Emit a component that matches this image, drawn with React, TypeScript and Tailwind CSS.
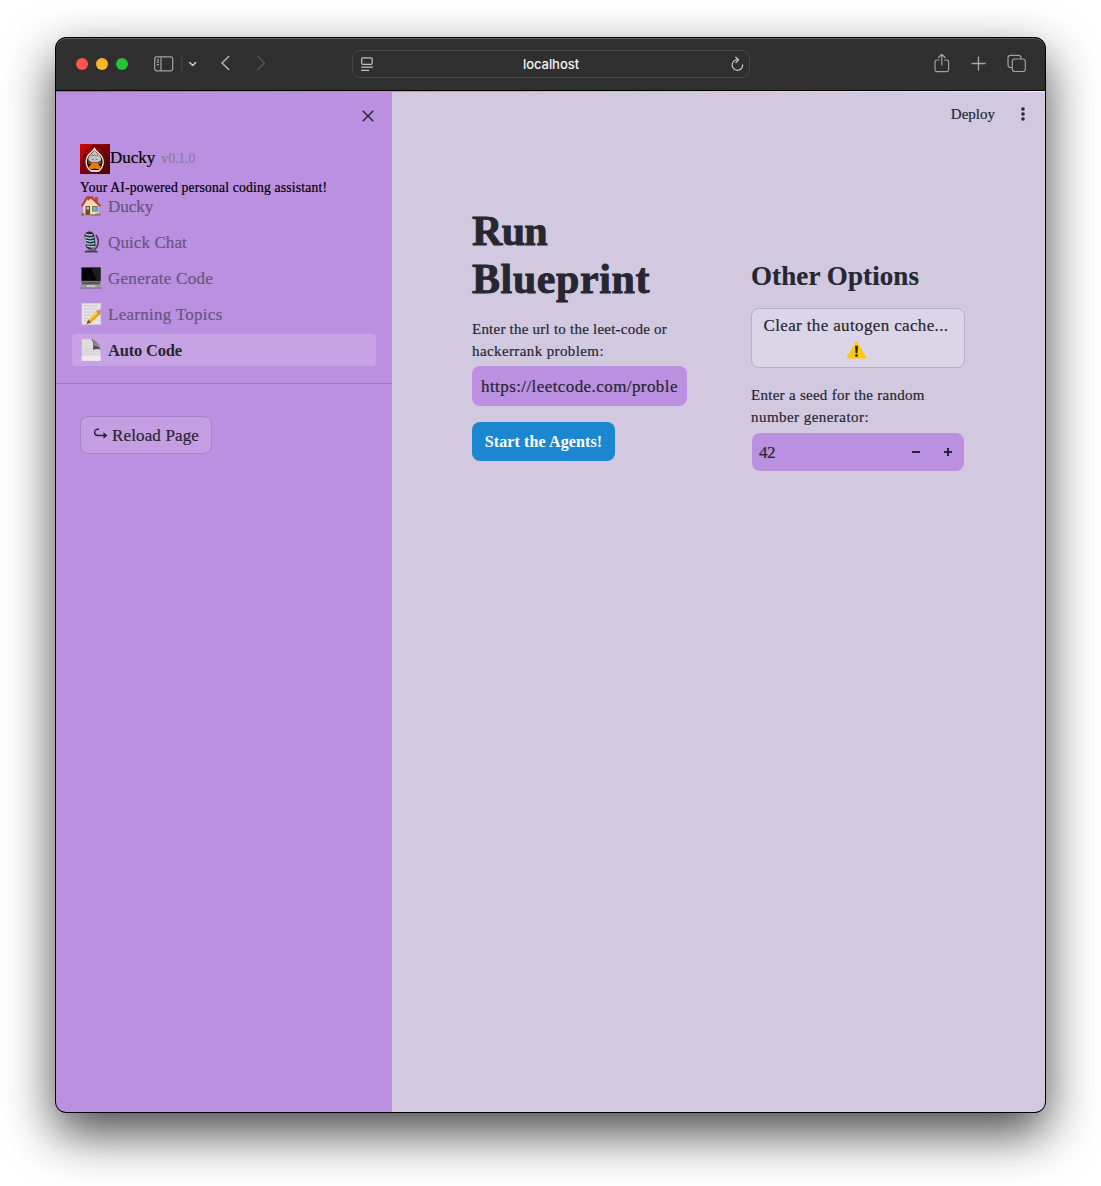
import React from "react";

function House() {
  return (
    <svg width="22" height="22" viewBox="0 0 22 22">
      <rect x="15" y="2" width="3" height="7" fill="#a4543c" />
      <path d="M3.500 10 11 3l7.500 7v10h-15z" fill="#f0dfb4" />
      <path d="M3.500 10 7.500 4.500 11 9v11H3.500z" fill="#e9d3a2" />
      <path d="M.8 10.800 6.500 1.300h6l8.800 9.500-1.500 1.300-8.300-7.900-1-.8-8 8.600z" fill="#b8452f" />
      <path d="M3.500 10.500 7.500 4.200l4 5.800v4h-8z" fill="#f0dfb4" />
      <rect x="5.500" y="11" width="4.500" height="9" fill="#774629" />
      <rect x="6.500" y="12" width="2.500" height="2.500" fill="#a9c8d8" />
      <rect x="12.200" y="11" width="5.500" height="5.500" fill="#8b5a3a" />
      <rect x="13" y="11.800" width="4" height="4" fill="#5eb1df" />
      <path d="M1 19c1-2 2.500-2 3.500 0v1.800H1zM10 20.800c1-2.500 3-2 4-1 1-1.500 5-2 6.500 0v1z" fill="#7d8055" />
    </svg>
  );
}

function Microphone() {
  return (
    <svg width="22" height="22" viewBox="0 0 22 22">
      <path d="M5.500 19.500h11.500l1 2H4.500z" fill="#424347" />
      <path d="M16 4c3 4 3 9 .5 12.500l-3 3" fill="none" stroke="#3e3f45" strokeWidth="1.600" />
      <g transform="rotate(-8 10 10)">
        <rect x="5" y=".6" width="10" height="17.400" rx="4.500" fill="#242b35" />
        <path d="M6.500 2.500c2 1.200 4.500 2 7 1.500M5.700 5.500c2.500 1.500 5.500 2.300 8.500 1.500M5.700 8.500c2.500 1.500 5.500 2.300 8.500 1.500M5.700 11.500c2.500 1.500 5.500 2.300 8.500 1.500M6.500 14.500c2.500 1.500 5 2 7.200 1.500" fill="none" stroke="#b3d6e3" strokeWidth="1.400" />
        <path d="M5.500 5v9" stroke="#c8c5bd" strokeWidth=".8" />
      </g>
      <path d="M9 18h4l.8 2H8z" fill="#65646a" />
    </svg>
  );
}

function Laptop() {
  return (
    <svg width="22" height="22" viewBox="0 0 22 22">
      <path d="M1.200.2h19.600v16H1.200z" fill="#61616a" />
      <path d="M1.700.7h18.600v13.100H1.700z" fill="#050507" />
      <path d="M11 .7h9.300v13.100h-3z" fill="#1d1d22" />
      <path d="M1.800 14.500h18.400l1.600 6.200H.2z" fill="#9b9a99" />
      <path d="M2.500 14.800h17l.8 2.700H1.700z" fill="#59595d" />
      <path d="M7 18h8l.5 2.200h-9z" fill="#c5c3c3" />
      <path d="M.2 20.600h21.600v1H.2z" fill="#737176" />
    </svg>
  );
}

function Memo() {
  return (
    <svg width="22" height="22" viewBox="0 0 22 22">
      <path d="M1.800.2h19v21.500h-19z" fill="#e7e5e5" />
      <path d="M1.800.2h19v21.500h-19z" fill="none" stroke="#cac6cd" strokeWidth=".6" />
      <path d="M4 3h14M4 6h13M4 9h10M4 12h7M4 15h4M4 18h3" stroke="#b7b5b6" strokeWidth=".9" strokeDasharray="2 .7" />
      <path d="M17 7.500 20.500 11 11 19.700l-4.500 1.300 1.700-4.500z" fill="#f2a114" />
      <path d="M17 7.500 8.200 16.500l1.200 1.200 9.300-8.500z" fill="#ffd548" />
      <path d="m17.300 7.700 1.400-1.300c.8-.5 3.300 1.700 2.900 2.700L20.300 11z" fill="#e78279" />
      <path d="m16 8.500 1-1L20.500 11l-1 1z" fill="#93989e" />
      <path d="m7.200 19 1-2.500 2.800 3.200-4.500 1.300z" fill="#76583b" />
    </svg>
  );
}

function Page() {
  return (
    <svg width="22" height="22" viewBox="0 0 22 22">
      <path d="M1.800.2h10.400l8.300 10.300v11.200H1.800z" fill="#dedcdd" />
      <path d="M1.800 17h18.700v4.700H1.800z" fill="#edebed" />
      <path d="M3.500 10h14M3.500 12.500h14M3.500 15h14" stroke="#d1ced1" strokeWidth=".7" />
      <path d="M11 .2c2 1.500 2.800 5 2 10.600 3-1.200 6-1.200 7.500 0C20 6 15.500.7 11 .2z" fill="#4f4c52" />
      <path d="M11 .2c4 .5 8.700 5.500 9.500 10.300-2-3.300-4.500-4-6.700-3.800.3-3-.5-5.300-2.800-6.500z" fill="#918d94" />
    </svg>
  );
}

function DuckAvatar() {
  return (
    <svg width="30" height="30" viewBox="0 0 30 30" className="shrink-0">
      <defs>
        <linearGradient id="crimson" x1="0" y1="0" x2="1" y2="1">
          <stop offset="0" stopColor="#d40808" />
          <stop offset=".5" stopColor="#7b0505" />
          <stop offset="1" stopColor="#400303" />
        </linearGradient>
      </defs>
      <rect width="30" height="30" fill="url(#crimson)" />
      <path d="M4 24C1 13 7 3 15 2s15 9 11 22" fill="none" stroke="#4c0505" strokeWidth="1.200" />
      <path d="M14.500 4.500c1 2.500 2 3.200 4 4.500 3 2.500 5 6 4.700 10-.2 4.200-2.700 6.500-4.200 8h-8c-2-1.500-4.500-4-4.700-8C6 15 7.500 11.500 10.500 9c1.700-1.400 3-2.500 4-4.500z" fill="#160b08" stroke="#f4eee6" strokeWidth="1.300" />
      <path d="M14.500 5.500c.5 2.300 2.500 3.500 4.300 5 2 1.800 2.700 4 2.200 6L18 18.500h-6.500l-3-2c-.5-2 0-4.200 2-6 1.800-1.500 3.500-2.700 4-5z" fill="#c4c5c4" />
      <path d="M10.500 12c2-1 6-1 8 0M12 15l2 1m3.500-1-2 1" stroke="#73777a" strokeWidth="1" fill="none" />
      <circle cx="9.700" cy="18.500" r="1.600" fill="#a3440f" /><circle cx="19.800" cy="18.500" r="1.600" fill="#a3440f" />
      <path d="M11.500 19h6.500l1.500 3 1.500.4-1.500 3-4.700-.8-4.700.8-1.500-3 1.500-.4z" fill="#f17a0c" />
      <path d="M10.500 26h8.500l-1.500 1.500h-5z" fill="#e4ddd0" />
    </svg>
  );
}

const nav = [
  { label: "Ducky", Icon: House, style: "text-[17px]" },
  { label: "Quick Chat", Icon: Microphone, style: "text-[17px] tracking-[0.1px]" },
  { label: "Generate Code", Icon: Laptop, style: "text-[17px] tracking-[0.27px]" },
  { label: "Learning Topics", Icon: Memo, style: "text-[17px] tracking-[0.28px]" },
  { label: "Auto Code", Icon: Page, style: "text-[16.500px] tracking-[-0.18px]", active: true },
];

function Toolbar() {
  return (
    <header className="flex h-[52px] shrink-0 items-center rounded-t-[10px] bg-[#2f2f2f] shadow-[inset_0_1px_0_#606060]">
      <div className="ml-5 flex gap-2">
        <i className="size-3 rounded-full bg-[#ff544d]" />
        <i className="size-3 rounded-full bg-[#ffb429]" />
        <i className="size-3 rounded-full bg-[#26c238]" />
      </div>
      <svg className="-mt-px ml-[26px]" width="20" height="16" viewBox="0 0 20 16" fill="none" stroke="#a2a2a2" strokeWidth="1.200">
        <rect x=".7" y=".8" width="18" height="14" rx="2" />
        <path d="M7 .8v14M2.800 3.800H5M2.800 6.200H5M2.800 8.600H5" />
      </svg>
      <i className="ml-[7px] h-[18px] w-px bg-[#424242]" />
      <svg className="ml-[7px]" width="8" height="6" viewBox="0 0 8 6" fill="none" stroke="#c8c8c8" strokeWidth="1.600" strokeLinecap="round" strokeLinejoin="round"><path d="m.7 1.500 3 3 3-3" /></svg>
      <svg className="-mt-0.5 ml-6" width="9" height="16" viewBox="0 0 9 16" fill="none" stroke="#b4b4b4" strokeWidth="1.500" strokeLinecap="round" strokeLinejoin="round"><path d="M7.700 1.500 1 8l6.700 6.500" /></svg>
      <svg className="-mt-0.5 ml-[27px]" width="9" height="16" viewBox="0 0 9 16" fill="none" stroke="#565656" strokeWidth="1.500" strokeLinecap="round" strokeLinejoin="round"><path d="M.8 1.500 7.500 8 .8 14.500" /></svg>
      <div className="ml-[86px] flex h-7 w-[398px] shrink-0 items-center justify-between rounded-[8px] border border-[#474747] pr-[5px] pl-2">
        <svg width="13" height="15" viewBox="0 0 13 15" fill="none" stroke="#c2c2c2" strokeWidth="1.200" strokeLinecap="round">
          <rect x=".7" y=".8" width="10.500" height="6.500" rx="1.300" /><path d="M.6 10.200h10.800M.6 13.400h7" />
        </svg>
        <span className="pt-0.5 pr-0.5 font-['Inter',sans-serif] text-[13px] font-medium tracking-[-0.05px] text-[#f5f5f5]">localhost</span>
        <svg width="14" height="16" viewBox="0 0 14 16" fill="none" stroke="#c6c6c6" strokeWidth="1.200" strokeLinecap="round" strokeLinejoin="round">
          <path d="M7.700 3.700a5.300 5.300 0 1 0 5 5.200M5.800 1.200l2.800 2.600-2.600 2.700" />
        </svg>
      </div>
      <div className="mr-[19px] ml-auto flex items-center">
        <svg className="-mt-0.5" width="17" height="20" viewBox="0 0 17 20" fill="none" stroke="#a0a0a0" strokeWidth="1.200" strokeLinecap="round" strokeLinejoin="round">
          <path d="M6 7H3.800A1.800 1.800 0 0 0 2 8.800v8a1.800 1.800 0 0 0 1.800 1.800h10a1.800 1.800 0 0 0 1.800-1.800v-8A1.800 1.800 0 0 0 13.800 7h-2.200M8.800 12V1.500M5.500 4.500l3.300-3.200 3.300 3.200" />
        </svg>
        <svg className="-mt-0.5 ml-[21px]" width="15" height="15" viewBox="0 0 15 15" stroke="#a8a8a8" strokeWidth="1.300" strokeLinecap="round"><path d="M7.500 1v13M1 7.500h13" /></svg>
        <svg className="-mt-0.5 ml-[21px]" width="19" height="19" viewBox="0 0 19 19" fill="none" stroke="#a0a0a0" strokeWidth="1.200">
          <rect x="5.300" y="5" width="13" height="12.500" rx="2.500" /><path d="M5.300 13.500H3.500a2.500 2.500 0 0 1-2.500-2.500V3.800a2.500 2.500 0 0 1 2.500-2.500h8A2.500 2.500 0 0 1 14 3.800V5" />
        </svg>
      </div>
    </header>
  );
}

function Sidebar() {
  return (
    <aside className="w-[336px] shrink-0 bg-[#bb90e0]">
      <div className="flex h-[52px] justify-end pt-[18px] pr-[18px]">
        <svg width="12" height="12" viewBox="0 0 12 12" stroke="#292832" strokeWidth="1.500"><path d="m.7.7 10.600 10.600M11.300.7.700 11.300" /></svg>
      </div>
      <div className="flex h-[30px] items-center pl-6 text-black">
        <DuckAvatar />
        <span className="-mt-0.5 text-[17px] leading-7 [-webkit-text-stroke:0.2px_black]">Ducky</span>
        <span className="ml-1.5 text-[13.600px] text-[#8a7a9a] [-webkit-text-stroke:0.2px_#8a7a9a]">v0.1.0</span>
      </div>
      <p className="mt-1 h-[22px] pl-6 text-[13.600px] leading-[20px] tracking-[0.2px] whitespace-nowrap text-black [-webkit-text-stroke:0.2px_black]">Your AI-powered personal coding assistant!</p>
      <nav className="-mt-[10px] flex flex-col gap-1 px-4">
        {nav.map(({ label, Icon, style, active }) => (
          <a key={label} className={active ? "flex h-8 items-center gap-1.5 rounded-[4px] bg-[#c7a2e5] px-2 font-bold text-[#262730]" : "flex h-8 items-center gap-1.5 px-2 text-[#68557d] [-webkit-text-stroke:0.2px_#68557d]"}>
            <Icon />
            <span className="pt-0.5"><span className={style}>{label}</span></span>
          </a>
        ))}
      </nav>
      <hr className="mt-[17px] border-[#a07bc1]" />
      <button className="mt-8 ml-6 flex h-[38px] w-[132px] items-center rounded-[8px] border border-[#a783c8] bg-[#c59de2] pt-px pl-[13px] text-[17px] tracking-[0.14px] whitespace-nowrap text-[#262730] [-webkit-text-stroke:0.2px_#262730]">
        <svg className="-mt-1 mr-1" width="14" height="12" viewBox="0 0 14 12" fill="none" stroke="#262730" strokeWidth="1.400"><path d="M5 1.200H3.800A2.900 2.900 0 0 0 3.800 7.500H10" /><path d="m9.500 4.300 4 3.200-4 3.200z" fill="#262730" stroke="none" /></svg>
        Reload Page
      </button>
    </aside>
  );
}

export default function App() {
  return (
    <div className="h-[1186px] overflow-hidden bg-white pt-[37px] pl-[55px] font-['Liberation_Serif',serif]">
      <div className="flex h-[1076px] w-[991px] flex-col overflow-hidden rounded-[11px] border border-black bg-black shadow-[0_20px_50px_rgba(0,0,0,0.72)]">
        <Toolbar />
        <div className="mt-px h-px shrink-0 bg-[linear-gradient(90deg,#ff4b4b,#fffd80)]" />
        <div className="flex min-h-0 flex-1">
          <Sidebar />
          <main className="flex-1 bg-[#d2c9e1] text-[#262730] [-webkit-text-stroke:0.2px_#262730]">
            <div className="flex h-[44px] items-center justify-end pr-5">
              <span className="text-[15px]">Deploy</span>
              <svg className="ml-[26px]" width="4" height="14" viewBox="0 0 4 14" fill="#262730"><circle cx="2" cy="2" r="1.800" /><circle cx="2" cy="7" r="1.800" /><circle cx="2" cy="12" r="1.800" /></svg>
            </div>
            <div className="flex gap-16 pl-20">
              <section className="w-[215px] pt-[71px]">
                <h1 className="text-[42px] leading-[48px] font-bold [-webkit-text-stroke:0.9px_#262730]">
                  <span className="block tracking-[-0.700px]">Run</span>
                  <span className="block tracking-[0.6px]">Blueprint</span>
                </h1>
                <div className="mt-[15px] text-[15px] leading-[22px] whitespace-nowrap">
                  <span className="block tracking-[0.23px]">Enter the url to the leet-code or</span>
                  <span className="block tracking-[0.39px]">hackerrank problem:</span>
                </div>
                <div className="mt-1 flex h-10 items-center rounded-[8px] bg-[#bb90e0] px-[9px] pt-0.5 text-[17px] tracking-[0.42px] whitespace-nowrap">https://leetcode.com/proble</div>
                <button className="mt-4 flex h-[39px] w-[143px] items-center justify-center rounded-[8px] bg-[#1c87d1] text-[16px] font-bold tracking-[0.12px] whitespace-nowrap text-white [-webkit-text-stroke:0]">Start the Agents!</button>
              </section>
              <section className="w-[214px] pt-[122px]">
                <h2 className="pt-0.5 text-[27px] leading-[32px] font-bold tracking-[0.1px] whitespace-nowrap">Other Options</h2>
                <button className="mt-4 flex h-[60px] w-full flex-col items-center rounded-[8px] border border-[#b8b0c6] bg-[#dcd5e7] pt-1 text-[17px] leading-[25px] whitespace-nowrap">
                  <span className="-ml-1 tracking-[0.36px]">Clear the autogen cache...</span>
                  <svg className="mt-[3px] mr-[3px]" width="21" height="18" viewBox="0 0 21 18"><path d="M9.700 1q.8-1.200 1.600 0l9 15.300q.3 1.200-.8 1.200h-18q-1.100 0-.8-1.200z" fill="#ffca05" /><path d="M9.100 4.800h2.800l-.5 7.400H9.600z" fill="#25210e" /><circle cx="10.500" cy="14.600" r="1.400" fill="#25210e" /></svg>
                </button>
                <div className="mt-4 text-[15px] leading-[22px] whitespace-nowrap">
                  <span className="block tracking-[0.28px]">Enter a seed for the random</span>
                  <span className="block tracking-[0.45px]">number generator:</span>
                </div>
                <div className="mt-[5px] ml-px flex h-[38px] w-[212px] items-center rounded-[8px] bg-[#bb90e0] pl-[7px] text-[17px]">
                  <span className="pt-0.5 tracking-[-0.5px]">42</span>
                  <svg className="mr-[11px] ml-auto" width="42" height="10" viewBox="0 0 42 10" stroke="#262730" strokeWidth="2"><path d="M1 5h8M33 5h8M37 1v8" /></svg>
                </div>
              </section>
            </div>
          </main>
        </div>
      </div>
    </div>
  );
}
